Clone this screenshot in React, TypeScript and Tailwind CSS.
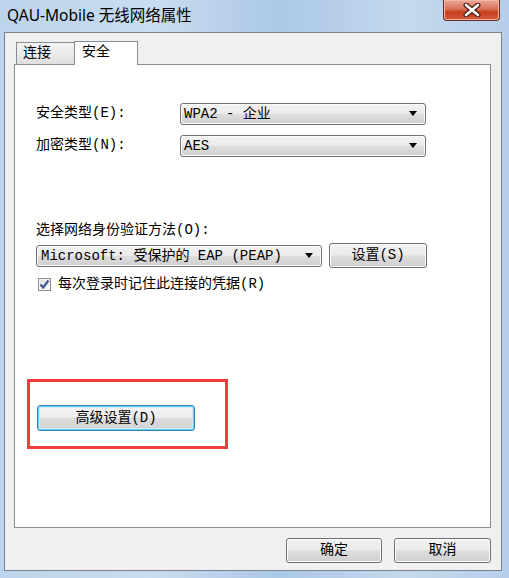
import { ReactNode } from 'react'

// Windows 7 style push button
function Button({ children, className = '', focused = false }: { children: ReactNode; className?: string; focused?: boolean }) {
  return (
    <div
      className={`flex items-center justify-center rounded-[3px] border text-[14px] text-black ${
        focused
          ? 'border-[#3c7fb1] bg-[linear-gradient(180deg,#f4f4f4_0%,#ececec_48%,#dcdcdc_52%,#d3d3d3_100%)] shadow-[inset_0_0_0_1px_#62d2f5,inset_0_0_0_2px_#c8eefc]'
          : 'border-[#707070] bg-[linear-gradient(180deg,#f2f2f2_0%,#ebebeb_48%,#dddddd_52%,#cfcfcf_100%)] shadow-[inset_0_0_0_1px_#fcfcfc]'
      } ${className}`}
    >
      {children}
    </div>
  )
}

// read-only combo box, drawn like a button with a black arrow
function Dropdown({ value, className = '' }: { value: string; className?: string }) {
  return (
    <div
      className={`flex h-[22px] items-center rounded-[3px] border border-[#707070] bg-[linear-gradient(180deg,#f2f2f2_0%,#ebebeb_48%,#dddddd_52%,#cfcfcf_100%)] pl-[3px] pr-[8px] shadow-[inset_0_0_0_1px_#fcfcfc] ${className}`}
    >
      <span className="flex-1 whitespace-pre text-[14px] leading-none text-black">{value}</span>
      <svg width="8" height="5" viewBox="0 0 8 5">
        <path d="M0 0 H8 L4 5 Z" fill="#000" />
      </svg>
    </div>
  )
}

export default function App() {
  return (
    <div className="flex h-[578px] w-[509px] flex-col overflow-hidden bg-[linear-gradient(90deg,#bcd4ec_0%,#cadcf0_30%,#abc8e6_55%,#c4d9ee_80%,#b5cee9_100%)] font-['Liberation_Mono','Noto_Sans_CJK_SC',monospace]">
      {/* title bar */}
      <div className="flex h-[32px] items-start">
        <div className="pl-[7px] pt-[5px] font-['Noto_Sans','Noto_Sans_CJK_SC',sans-serif] text-[15.5px] leading-[20px] text-black">
          QAU-Mobile 无线网络属性
        </div>
        <div className="ml-auto mr-[9px] flex h-[21px] w-[57px] items-center justify-center rounded-b-[4px] border border-t-0 border-[#6a2a20] bg-[linear-gradient(180deg,#eaa896_0%,#da7158_45%,#c8401f_60%,#d45a3a_100%)] shadow-[inset_0_0_0_1px_#f0b5a5]">
          <svg width="18" height="14" viewBox="0 0 18 14">
            <path d="M3 2 L15 12 M15 2 L3 12" stroke="#4a1a12" strokeWidth="5" strokeLinecap="round" />
            <path d="M3 2 L15 12 M15 2 L3 12" stroke="#ffffff" strokeWidth="2.6" strokeLinecap="round" />
          </svg>
        </div>
      </div>

      {/* dialog body */}
      <div className="ml-[4px] flex h-[539px] w-[498px] flex-col border border-[#7a838c] bg-[#f0f0f0] pl-[9px] pt-[8px]">
        {/* tabs */}
        <div className="relative z-10 flex h-[23px] items-end">
          <div className="ml-[2px] flex h-[22px] w-[59px] items-center border border-b-0 border-[#898c95] bg-[linear-gradient(180deg,#f3f3f3_0%,#ebebeb_50%,#dedede_100%)] pl-[6px] text-[14px] text-black">
            连接
          </div>
          <div className="-mb-px -ml-px flex h-[24px] w-[64px] items-center border border-b-0 border-[#898c95] bg-white pb-[2px] pl-[7px] text-[14px] text-black">
            安全
          </div>
        </div>

        {/* tab panel */}
        <div className="flex h-[464px] w-[477px] flex-col border border-[#898c95] bg-white pl-[21px] pt-[37px] text-[14px] text-black">
          <div className="flex h-[23px] items-center">
            <span className="w-[144px]">安全类型(E):</span>
            <Dropdown value="WPA2 - 企业" className="w-[246px]" />
          </div>
          <div className="mt-[9px] flex h-[23px] items-center">
            <span className="w-[144px]">加密类型(N):</span>
            <Dropdown value="AES" className="w-[246px]" />
          </div>

          <div className="mt-[65px] leading-[16px]">选择网络身份验证方法(O):</div>
          <div className="mt-[5px] flex h-[25px] items-center">
            <Dropdown value="Microsoft: 受保护的 EAP (PEAP)" className="w-[286px] pl-[4px]" />
            <Button className="ml-[7px] h-[25px] w-[98px]">设置(S)</Button>
          </div>

          <div className="mt-[9px] flex h-[14px] items-center">
            <div className="ml-[2px] flex h-[13px] w-[13px] items-center justify-center border border-[#8e8f8f] bg-[linear-gradient(135deg,#dcdcdc_0%,#ffffff_100%)] shadow-[inset_0_0_0_1px_#f4f4f4]">
              <svg width="11" height="11" viewBox="0 0 11 11">
                <path d="M1.5 5.5 L4.2 8.5 L9.5 1.5" fill="none" stroke="#3b5998" strokeWidth="2.2" />
              </svg>
            </div>
            <span className="ml-[7px]">每次登录时记住此连接的凭据(R)</span>
          </div>

          {/* highlighted area */}
          <div className="-ml-[9px] mt-[88px] h-[70px] w-[201px] border-[3px] border-[#f03c3c] pl-[7px] pt-[23px]">
            <Button focused className="h-[26px] w-[158px]">高级设置(D)</Button>
          </div>
        </div>

        {/* footer buttons */}
        <div className="mt-[10px] flex w-[477px] justify-end">
          <Button className="h-[25px] w-[96px]">确定</Button>
          <Button className="ml-[12px] h-[25px] w-[97px]">取消</Button>
        </div>
      </div>
    </div>
  )
}
